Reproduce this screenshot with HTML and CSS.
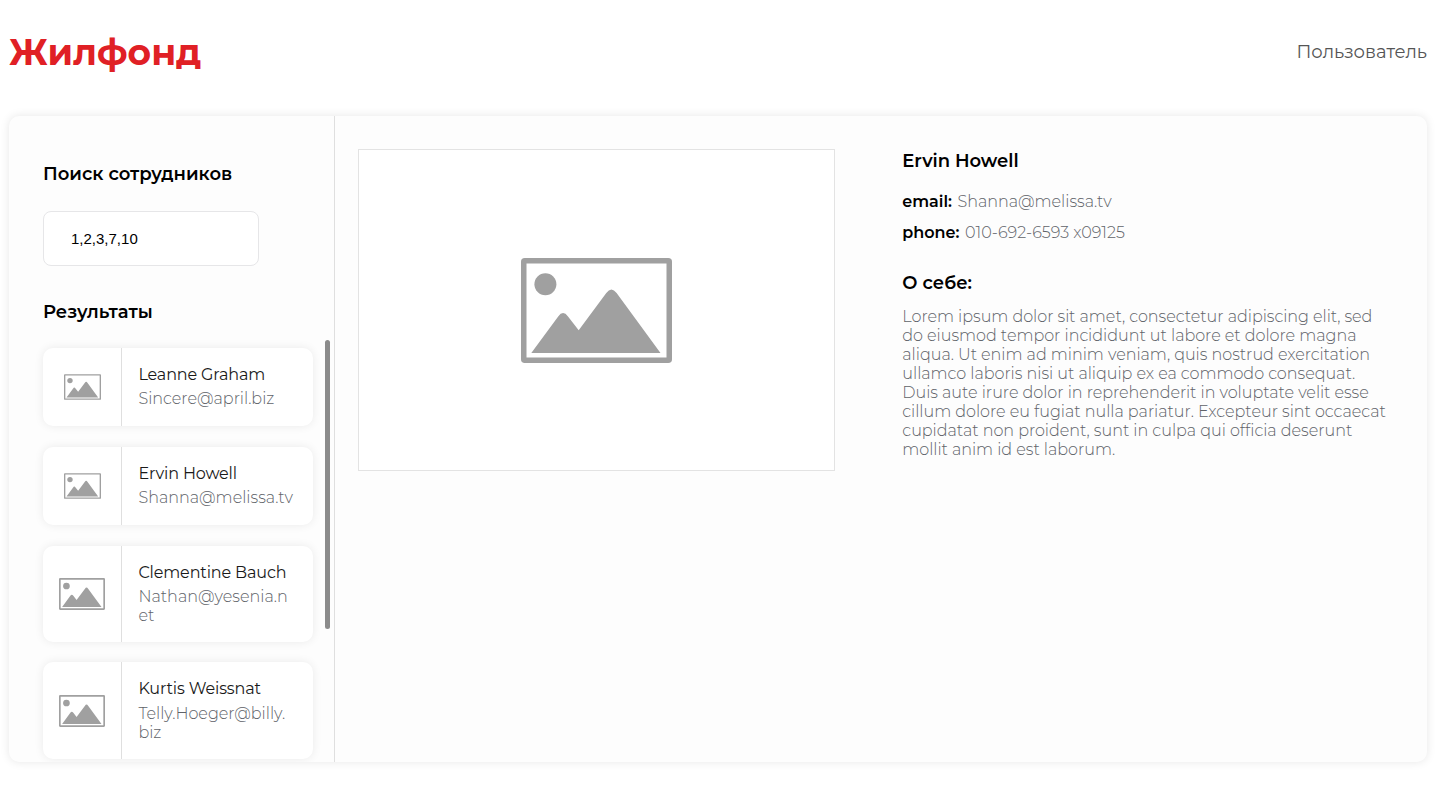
FILE: index.html
```
<!DOCTYPE html>
<html lang="ru">
<head>
<meta charset="utf-8">
<title>Жилфонд</title>
<link rel="stylesheet" href="styles.css">
</head>
<body>
<svg class="sprite" aria-hidden="true">
  <symbol id="picture" viewBox="0 0 151 105">
    <rect x="2.75" y="2.75" width="145.5" height="99.5" rx="1" fill="#fff" stroke="#a0a0a0" stroke-width="5.5"/>
    <circle cx="24.4" cy="26.3" r="11" fill="#a0a0a0"/>
    <path d="M10.3 95 37.2 58.4Q42 51.6 47 58.4L57.7 72.3 85.3 35Q90.3 28 95.6 35L139.5 95Z" fill="#a0a0a0"/>
  </symbol>
</svg>
<header class="header">
  <div class="logo">Жилфонд</div>
  <div class="user">Пользователь</div>
</header>
<main class="panel">
  <aside class="sidebar">
    <h2 class="title title-search">Поиск сотрудников</h2>
    <input class="search" type="text" value="1,2,3,7,10">
    <h2 class="title title-results">Результаты</h2>
    <div class="results">
      <div class="list">
        <article class="card">
          <div class="thumb"><svg class="icon"><use href="#picture"/></svg></div>
          <div class="info"><div class="name">Leanne Graham</div><div class="mail">Sincere@april.biz</div></div>
        </article>
        <article class="card">
          <div class="thumb"><svg class="icon"><use href="#picture"/></svg></div>
          <div class="info"><div class="name">Ervin Howell</div><div class="mail">Shanna@melissa.tv</div></div>
        </article>
        <article class="card card-tall">
          <div class="thumb"><svg class="icon"><use href="#picture"/></svg></div>
          <div class="info"><div class="name">Clementine Bauch</div><div class="mail">Nathan@yesenia.n<br>et</div></div>
        </article>
        <article class="card card-tall card-last">
          <div class="thumb"><svg class="icon"><use href="#picture"/></svg></div>
          <div class="info"><div class="name">Kurtis Weissnat</div><div class="mail">Telly.Hoeger@billy.<br>biz</div></div>
        </article>
      </div>
      <div class="scroll-thumb"></div>
    </div>
  </aside>
  <section class="profile">
    <div class="photo"><svg class="photo-icon"><use href="#picture"/></svg></div>
    <div class="details">
      <h2 class="title">Ervin Howell</h2>
      <p class="field field-email"><b>email:</b><span>Shanna@melissa.tv</span></p>
      <p class="field"><b>phone:</b><span>010-692-6593 x09125</span></p>
      <h2 class="title title-about">О себе:</h2>
      <p class="about">Lorem ipsum dolor sit amet, consectetur adipiscing elit, sed<br>do eiusmod tempor incididunt ut labore et dolore magna<br>aliqua. Ut enim ad minim veniam, quis nostrud exercitation<br>ullamco laboris nisi ut aliquip ex ea commodo consequat.<br>Duis aute irure dolor in reprehenderit in voluptate velit esse<br>cillum dolore eu fugiat nulla pariatur. Excepteur sint occaecat<br>cupidatat non proident, sunt in culpa qui officia deserunt<br>mollit anim id est laborum.</p>
    </div>
  </section>
</main>
</body>
</html>
```
FILE: styles.css
```
* { box-sizing: border-box; }
body {
  margin: 0;
  height: 787px;
  padding: 0 13px 0 9px;
  overflow: hidden;
  background: #fff;
  color: #000;
  font-family: Montserrat, Inter, sans-serif;
  font-size: 16px;
  line-height: 19px;
}
h2, p { margin: 0; }
.sprite { display: none; }
.header {
  display: flex;
  justify-content: space-between;
  align-items: center;
  height: 116px;
  padding-bottom: 11px;
}
.logo {
  margin-top: -1px;
  color: #e02025;
  font-size: 36px;
  line-height: 44px;
  font-weight: 700;
}
.user {
  color: #555;
  font-size: 18px;
  font-weight: 400;
}
.panel {
  display: flex;
  height: 646px;
  border-radius: 10px;
  background: #fdfdfd;
  box-shadow: 0 0 10px rgba(0, 0, 0, 0.1);
}
.sidebar {
  width: 326px;
  padding: 47px 0 0 34px;
  border-right: 1px solid #dfdfdf;
  display: flex;
  flex-direction: column;
}
.title {
  font-size: 18px;
  line-height: 22px;
  font-weight: 600;
  letter-spacing: -0.02px;
}
.search {
  width: 216px;
  height: 55px;
  margin: 26px 0 35px;
  padding: 0 27px;
  border: 1px solid #e6e6e8;
  border-radius: 8px;
  background: #fff;
  color: #000;
  font: 15px "Liberation Sans", Arial, sans-serif;
  outline: none;
}
.results {
  display: flex;
  flex: 1;
  min-height: 0;
  margin: 17px 0 0 -10px;
  overflow: hidden;
}
.list {
  display: flex;
  flex-direction: column;
  gap: 21px;
  width: 290px;
  padding: 8px 10px 0;
}
.scroll-thumb {
  width: 5px;
  height: 289px;
  margin-left: 2px;
  border-radius: 3px;
  background: #8b8b8b;
}
.card {
  display: flex;
  flex: none;
  height: 78px;
  border-radius: 10px;
  background: #fff;
  box-shadow: 0 0 10px rgba(0, 0, 0, 0.08);
}
.card-tall { height: 96px; }
.card-last { height: 97px; margin-top: -1px; }
.thumb {
  display: flex;
  align-items: center;
  justify-content: center;
  width: 79px;
  border-right: 1px solid #dfdfdf;
}
.icon { width: 37px; height: 26px; }
.card-tall .icon { width: 46px; height: 32px; }
.info { padding: 17px 0 0 16.4px; }
.name { font-weight: 400; letter-spacing: -0.14px; color: #1a1a1a; }
.mail { margin-top: 5px; font-weight: 300; color: #606369; }
.card-last .mail { margin-top: 6px; }
.profile { display: flex; padding: 33px 0 0 23px; }
.photo {
  display: flex;
  align-items: center;
  justify-content: center;
  width: 477px;
  height: 322px;
  border: 1px solid #e3e3e3;
  background: #fff;
}
.photo-icon { width: 151px; height: 105px; }
.details { margin-left: 67.3px; padding-top: 1px; white-space: nowrap; }
.field { display: flex; gap: 5.6px; margin-top: 12px; }
.field-email { margin-top: 20px; }
.field b { font-weight: 600; }
.field span { font-weight: 300; letter-spacing: -0.03px; color: #606369; }
.title-about { margin-top: 30px; }
.about { margin-top: 13px; font-weight: 300; letter-spacing: -0.02px; color: #606369; }
```
